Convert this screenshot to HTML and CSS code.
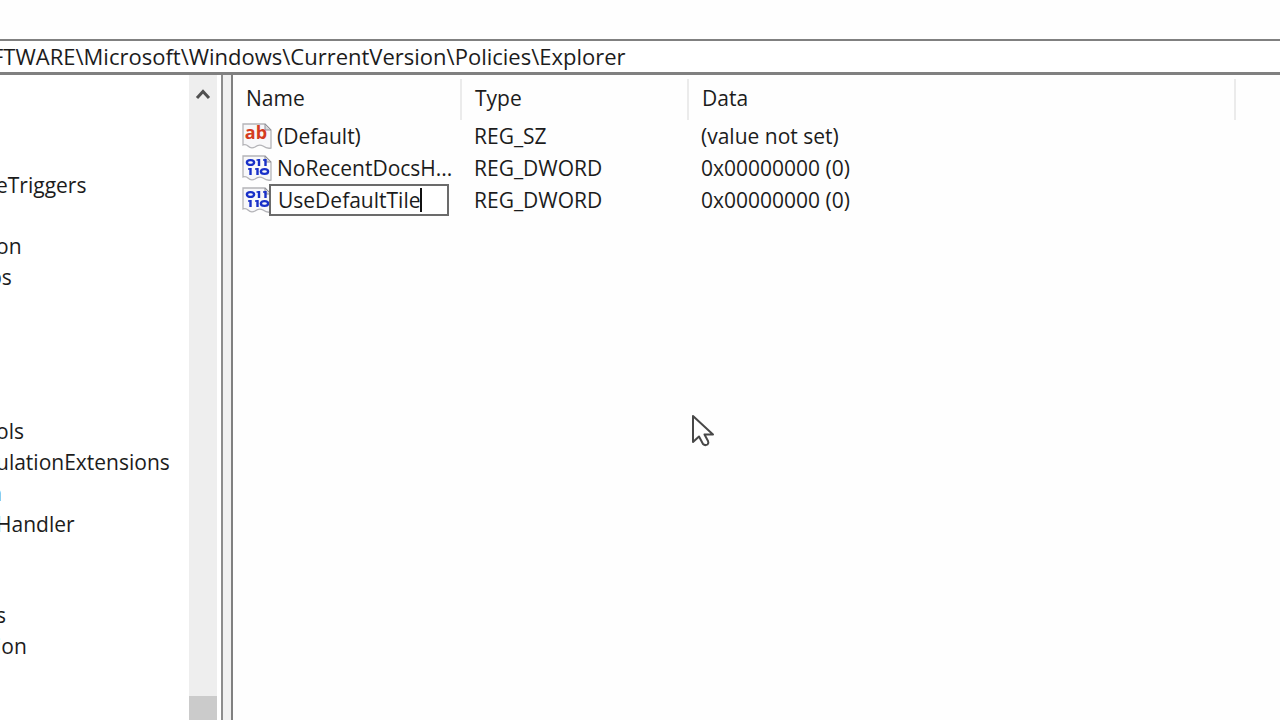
FILE: index.html
```html
<!DOCTYPE html>
<html lang="en">
<head>
<meta charset="utf-8">
<title>Registry Editor</title>
<link rel="stylesheet" href="styles.css">
</head>
<body>
<svg class="defs" aria-hidden="true">
  <symbol id="page" viewBox="0 0 30 28">
    <path d="M1 2H23L29 8V26Q25 27 21 24Q17 22 13 25Q9 27 6 24Q4 22 1 23Z" fill="#f8f8fa" stroke="#b4b4b8" stroke-width="1.3"/>
    <path d="M23 2V8H29Z" fill="#d8d8dc" stroke="#929298"/>
  </symbol>
  <symbol id="binary-value" viewBox="0 0 30 28">
    <use href="#page"/>
    <g fill="none" stroke="#1830c8" stroke-width="2.4">
      <ellipse cx="8.500" cy="8.500" rx="3.600" ry="2.400"/>
      <path d="M17 5V12M23.500 5V12M8.500 14V21M15.500 14V21"/>
      <path d="M14.500 6H17M21 6H23.500M6 15H8.500M13 15H15.500" stroke-width="1.500"/>
      <ellipse cx="22.500" cy="17.500" rx="3.600" ry="2.400"/>
    </g>
  </symbol>
</svg>
<header class="address">
  <input class="address-input" type="text" aria-label="Registry path" spellcheck="false" value="FTWARE\Microsoft\Windows\CurrentVersion\Policies\Explorer">
</header>
<main class="workspace">
  <nav class="tree-pane" aria-label="Registry keys">
    <div class="tree">
      <ul class="keys"><li>eTriggers</li></ul>
      <ul class="keys"><li>on</li><li class="key-edge">ps</li></ul>
      <ul class="keys keys-far"><li>ols</li><li>ulationExtensions</li><li class="key-edge">n</li><li>Handler</li></ul>
      <ul class="keys"><li>s</li><li>ion</li></ul>
    </div>
    <div class="scrollbar">
      <button class="scroll-up" type="button" aria-label="Scroll up"><svg width="16" height="12" viewBox="0 0 16 12"><path d="M2 10L8 3.500L14 10" fill="none" stroke="#505050" stroke-width="3"/></svg></button>
      <div class="scroll-thumb"></div>
    </div>
  </nav>
  <section class="values-pane">
    <table class="values">
      <colgroup><col class="col-name"><col class="col-type"><col class="col-data"><col></colgroup>
      <thead><tr><th>Name</th><th>Type</th><th>Data</th><td></td></tr></thead>
      <tbody>
        <tr><td><div class="value-name"><svg class="icon" viewBox="0 0 30 28"><use href="#page"/><text class="icon-string" x="14" y="17" text-anchor="middle">ab</text></svg><span class="label">(Default)</span></div></td><td>REG_SZ</td><td>(value not set)</td><td></td></tr>
        <tr><td><div class="value-name"><svg class="icon"><use href="#binary-value"/></svg><span class="label">NoRecentDocsH...</span></div></td><td>REG_DWORD</td><td>0x00000000 (0)</td><td></td></tr>
        <tr><td><div class="value-name"><svg class="icon"><use href="#binary-value"/></svg><div class="rename"><input class="rename-input" type="text" aria-label="Value name" spellcheck="false" value="UseDefaultTile"><span class="caret"></span></div></div></td><td>REG_DWORD</td><td>0x00000000 (0)</td><td></td></tr>
      </tbody>
    </table>
  </section>
</main>
<svg class="pointer" width="26" height="36" viewBox="0 0 26 36" aria-hidden="true"><path d="M3 3V29L9 23.500L13 31Q15 33 17.500 31.500Q19 30 18 28L14.500 21.500H23Z" fill="#fff" stroke="#484848" stroke-width="2" stroke-linejoin="round"/></svg>
</body>
</html>
```
FILE: styles.css
```css
* { box-sizing: border-box; }

body {
  margin: 0;
  height: 100vh;
  display: flex;
  flex-direction: column;
  overflow: hidden;
  background: #fefefe;
  color: #1c1c1c;
  font: 21px/31px "Open Sans", "Noto Sans", sans-serif;
}

.defs { position: absolute; width: 0; height: 0; }

.address {
  margin-top: 39px;
  border-top: 2px solid #808080;
  border-bottom: 3px solid #808080;
  background: #fff;
}

.address-input {
  display: block;
  width: 100%;
  height: 31px;
  margin-left: -8px;
  padding: 0;
  border: 0;
  outline: 0;
  background: none;
  color: inherit;
  font: inherit;
  font-size: 22px;
}

.workspace {
  flex: 1;
  min-height: 0;
  display: flex;
  gap: 8px;
  background: #f0f0f0;
}

.tree-pane {
  display: flex;
  flex: 0 0 223px;
  padding-right: 4px;
  border-right: 2px solid #8c8c8c;
  background: #fff;
}

.tree {
  flex: 1;
  min-width: 0;
  overflow: hidden;
  padding-top: 95px;
}

.keys {
  margin: 0 0 30px -4px;
  padding: 0;
  list-style: none;
  white-space: nowrap;
}

.keys-far { margin-top: 123px; margin-bottom: 60px; }

.key-edge { margin-left: -7px; }

.scrollbar {
  width: 28px;
  display: flex;
  flex-direction: column;
  justify-content: space-between;
  background: #eee;
}

.scroll-up {
  height: 38px;
  padding: 0;
  border: 0;
  background: none;
}

.scroll-up svg { display: block; margin: auto; }

.scroll-thumb { height: 24px; background: #cbcbcb; }

.values-pane {
  flex: 1;
  min-width: 0;
  padding-top: 4px;
  border-left: 2px solid #808080;
  background: #fefefe;
}

.values {
  width: 100%;
  table-layout: fixed;
  border-collapse: collapse;
  white-space: nowrap;
}

.col-name { width: 228px; }
.col-type { width: 227px; }
.col-data { width: 547px; }

.values th {
  height: 41px;
  padding: 0 13px 3px;
  border-right: 2px solid #ebebeb;
  font-weight: 400;
  text-align: left;
}

.values tbody td {
  height: 32px;
  padding: 0 0 0 13px;
}

.values tbody td:first-child { padding-left: 9px; }

.value-name { display: flex; align-items: center; }

.icon { flex: none; width: 30px; height: 28px; }

.icon-string { fill: #d43c22; font: 700 18px "Open Sans", sans-serif; }

.label { padding-left: 5px; }

.rename {
  position: relative;
  width: 180px;
  margin-left: -3px;
}

.rename-input {
  display: block;
  width: 100%;
  height: 32px;
  padding: 0 7px;
  border: 2px solid #6b6b6b;
  outline: 0;
  border-radius: 0;
  background: #fff;
  color: inherit;
  font: inherit;
}

.caret {
  position: absolute;
  left: 151px;
  top: 4px;
  width: 2px;
  height: 24px;
  background: #111;
}

.pointer { position: absolute; left: 690px; top: 413px; }
```
